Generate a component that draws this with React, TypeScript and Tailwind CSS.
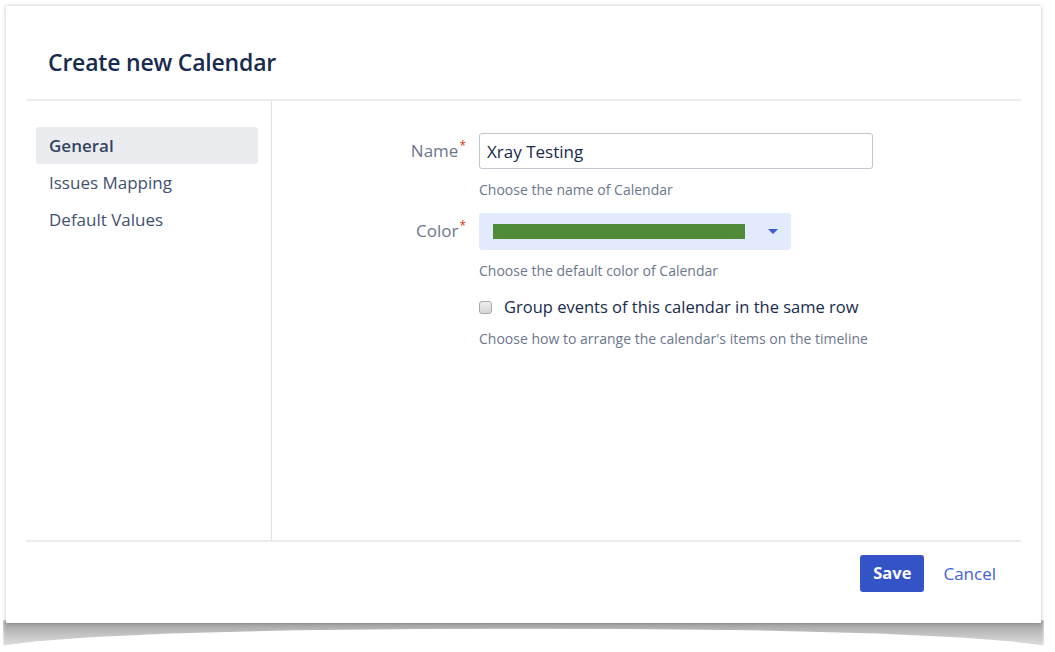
import React, { useState } from 'react';

const font = { fontFamily: '"Open Sans", "Noto Sans", Arial, sans-serif' };

const navItems = ['General', 'Issues Mapping', 'Default Values'];

const Label = ({ text }: { text: string }) => (
  <div className="w-[207px] pr-[13px] text-right text-[17px] text-[#6b778c] leading-[36px]">
    {text}
    <span className="relative -top-[7px] ml-[1px] text-[12px] text-[#de350b]">*</span>
  </div>
);

export default function App() {
  const [active] = useState('General');
  const [group, setGroup] = useState(false);

  return (
    <div className="w-[1055px] h-[652px] bg-white pt-[6px] pl-[6px]" style={font}>
      <div className="relative w-[1035px] h-[617px]">
        {/* curled bottom shadow */}
        <div className="absolute left-[-3px] right-[-3px] top-[614px] h-[30px] bg-gradient-to-b from-[#9c9c9c] via-[#c4c4c4] to-[#e8e8e8] blur-[1.5px] [clip-path:polygon(0_0,100%_0,100%_85%,97%_72%,92%_58%,84%_45%,72%_34%,60%_30%,50%_29%,40%_30%,28%_34%,16%_45%,8%_58%,3%_72%,0_85%)]" />

        <div className="relative flex flex-col w-full h-full bg-white shadow-[0_0_4px_rgba(0,0,0,0.25)]">
          {/* Header */}
          <div className="h-[93px] flex items-center pl-[42px] pt-[19px]">
            <h1 className="text-[23px] font-semibold text-[#172b4d] tracking-[-0.2px]">Create new Calendar</h1>
          </div>
          <div className="mx-[20px] h-[2px] bg-[#ebecf0]" />

          {/* Body */}
          <div className="flex h-[439px] mx-[20px]">
            <nav className="w-[246px] border-r border-[#dfe1e6] pt-[26px] pl-[10px] pr-[13px] flex flex-col">
              {navItems.map((item) => (
                <div
                  key={item}
                  className={`h-[37px] flex items-center px-[13px] rounded-[3px] text-[17px] ${
                    active === item ? 'bg-[#ebecf0] font-semibold text-[#344563]' : 'text-[#42526e]'
                  }`}
                >
                  {item}
                </div>
              ))}
            </nav>

            <div className="flex-1 pt-[32px]">
              {/* Name */}
              <div className="flex">
                <Label text="Name" />
                <div>
                  <input
                    defaultValue="Xray Testing"
                    className="w-[394px] h-[36px] border border-[#c1c7d0] rounded-[3px] px-[7px] text-[17px] text-[#172b4d] outline-none"
                    style={font}
                  />
                  <div className="mt-[10px] text-[14px] text-[#6b778c]">Choose the name of Calendar</div>
                </div>
              </div>

              {/* Color */}
              <div className="flex mt-[13px]">
                <Label text="Color" />
                <div>
                  <div className="w-[312px] h-[37px] bg-[#e2eafd] rounded-[3px] flex items-center pl-[14px] pr-[13px]">
                    <div className="w-[252px] h-[15px] bg-[#4f8a38]" />
                    <div className="ml-auto w-0 h-0 border-l-[5px] border-r-[5px] border-t-[5px] border-l-transparent border-r-transparent border-t-[#3e5bd1]" />
                  </div>
                  <div className="mt-[10px] text-[14px] text-[#6b778c]">Choose the default color of Calendar</div>

                  {/* Group events */}
                  <label className="mt-[15px] flex items-center cursor-pointer">
                    <span
                      onClick={() => setGroup(!group)}
                      className="w-[13px] h-[13px] rounded-[3px] border border-[#a9a9a9] bg-gradient-to-b from-[#ececec] to-[#d6d6d6]"
                    />
                    <span className="ml-[12px] text-[16.5px] text-[#172b4d] leading-[22px]">
                      Group events of this calendar in the same row
                    </span>
                  </label>
                  <div className="mt-[10px] text-[14px] text-[#6b778c]">
                    Choose how to arrange the calendar's items on the timeline
                  </div>
                </div>
              </div>
            </div>
          </div>

          <div className="mx-[20px] h-[2px] bg-[#ebecf0]" />

          {/* Footer */}
          <div className="flex justify-end items-start pt-[13px] pr-[45px]">
            <button className="h-[37px] px-[13px] rounded-[3px] bg-[#3353c7] text-white text-[16.5px] font-bold" style={font}>
              Save
            </button>
            <button className="h-[37px] ml-[19px] text-[17px] text-[#4062d8]" style={font}>
              Cancel
            </button>
          </div>
        </div>
      </div>
    </div>
  );
}
